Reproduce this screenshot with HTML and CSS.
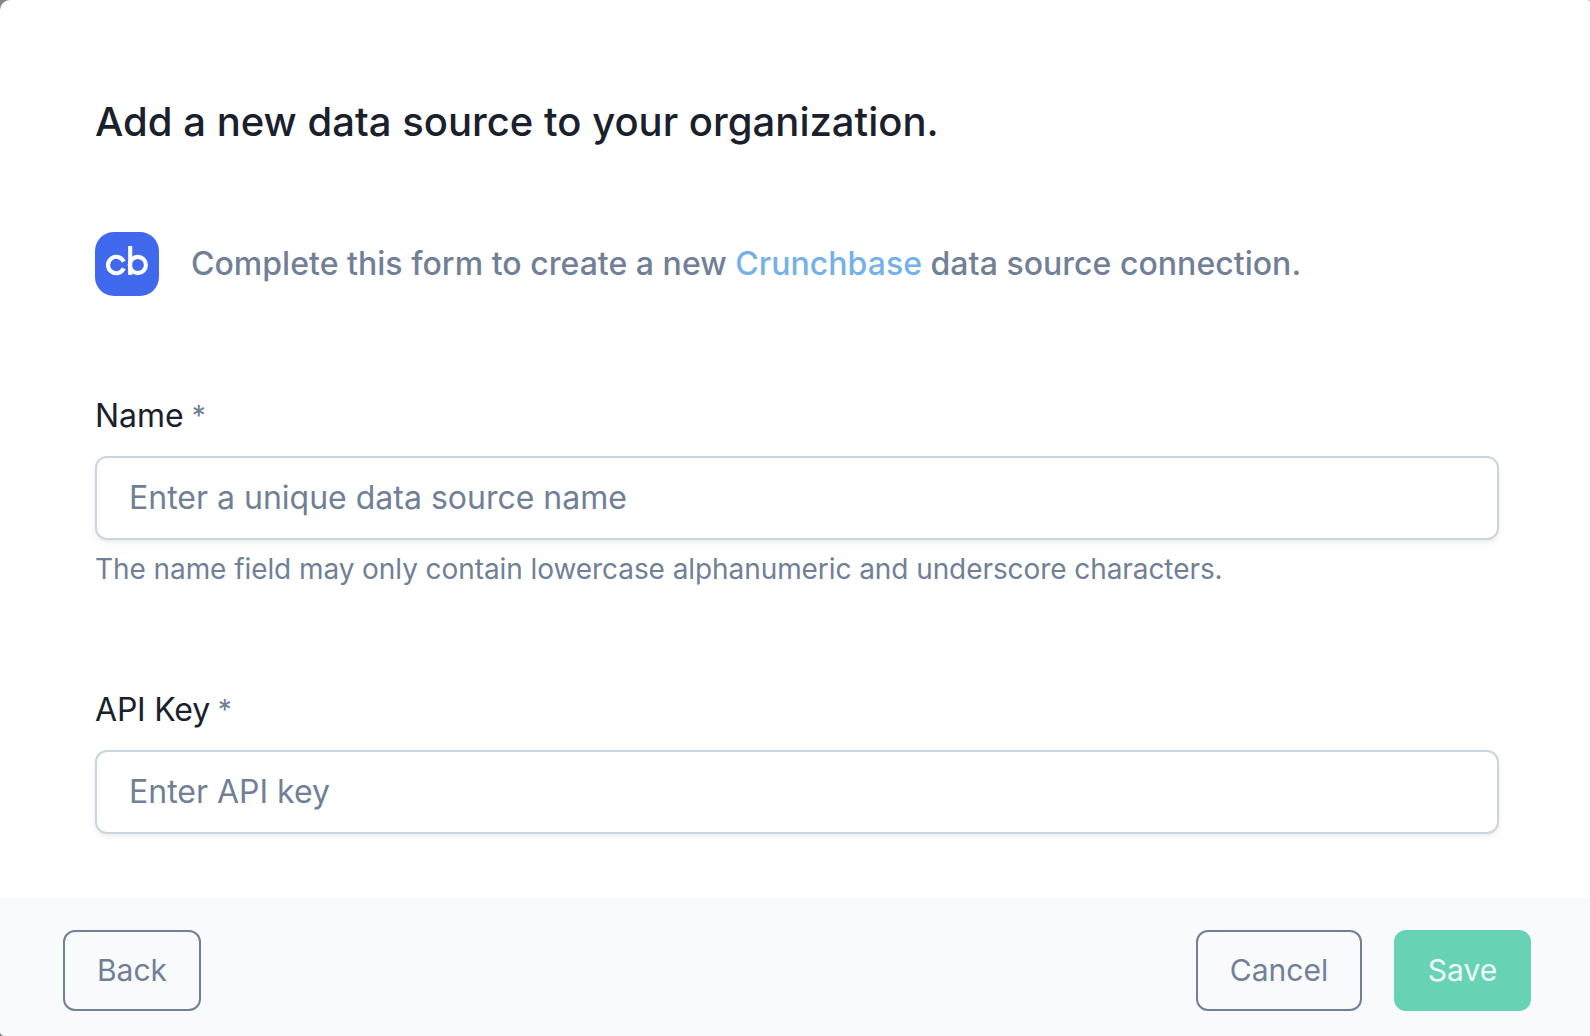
FILE: index.html
```html
<!DOCTYPE html>
<html lang="en">
<head>
<meta charset="utf-8">
<title>Add data source</title>
<link rel="stylesheet" href="styles.css">
</head>
<body>
<main class="modal">
  <form class="content">
    <h1 class="title">Add a new data source to your organization.</h1>
    <div class="intro">
      <svg class="logo" viewBox="0 0 64 64" role="img" aria-label="Crunchbase">
        <rect width="64" height="64" rx="19" fill="#4069ee"/>
        <g fill="none" stroke="#fff" stroke-width="4.1">
          <path d="M28.700 29.600A8.200 8.200 0 1 0 28.700 36.400"/>
          <path d="M35.200 14V42.900"/>
          <circle cx="42.800" cy="33" r="8.100"/>
        </g>
      </svg>
      <p class="intro-text">Complete this form to create a new <a class="link">Crunchbase</a> data source connection.</p>
    </div>
    <div class="field">
      <label class="label" for="name">Name <span class="required">*</span></label>
      <input class="input" id="name" type="text" placeholder="Enter a unique data source name">
      <p class="hint">The name field may only contain lowercase alphanumeric and underscore characters.</p>
    </div>
    <div class="field">
      <label class="label key-label" for="key">API Key <span class="required">*</span></label>
      <input class="input" id="key" type="text" placeholder="Enter API key">
    </div>
  </form>
  <footer class="footer">
    <button class="button back" type="button">Back</button>
    <button class="button cancel" type="button">Cancel</button>
    <button class="button save" type="button">Save</button>
  </footer>
</main>
</body>
</html>
```
FILE: styles.css
```css
* { box-sizing: border-box; }
body {
  margin: 0;
  background: #87878f;
  font-family: Inter, "Liberation Sans", sans-serif;
  color: #1a202c;
  overflow: hidden;
}
.modal {
  display: flex;
  flex-direction: column;
  height: 1036px;
  background: #fff;
  border-radius: 10px 2px 0 5px;
  overflow: hidden;
}
.content {
  flex: 1;
  padding: 98px 91px 0 95px;
}
.title {
  margin: 0;
  font-size: 40px;
  line-height: 48px;
  font-weight: 500;
  letter-spacing: .02px;
  white-space: nowrap;
}
.intro {
  display: flex;
  align-items: center;
  gap: 32px;
  margin-top: 86px;
  height: 64px;
}
.logo { width: 64px; height: 64px; flex: none; }
.intro-text {
  margin: 0;
  font-size: 32px;
  line-height: 48px;
  font-weight: 500;
  letter-spacing: .03px;
  color: #718096;
  white-space: nowrap;
}
.link { color: #74b0ea; }
.field { height: 294px; padding-top: 96px; }
.label {
  display: block;
  height: 64px;
  font-size: 32px;
  line-height: 48px;
}
.key-label { letter-spacing: -.2px; }
.required {
  margin-left: -1px;
  color: #718096;
  font-size: 28px;
  line-height: 1;
  vertical-align: 1px;
}
.input {
  display: block;
  width: 100%;
  height: 84px;
  padding: 0 32px 2px;
  border: 2px solid #cbd5e0;
  border-radius: 12px;
  background: #fff;
  box-shadow: 0 2px 4px rgba(0, 0, 0, .05), 0 4px 8px rgba(0, 0, 0, .03);
  font: 400 32px/48px Inter, "Liberation Sans", sans-serif;
}
.input::placeholder { color: #718096; opacity: 1; }
.hint {
  margin: 8px 0 0;
  font-size: 28px;
  line-height: 42px;
  letter-spacing: -.075px;
  color: #718096;
  white-space: nowrap;
}
.footer {
  display: flex;
  align-items: flex-start;
  gap: 32px;
  height: 138px;
  padding: 32px 59px 0 63px;
  background: #f8fafc;
}
.button {
  height: 81px;
  padding: 0;
  border: 2px solid #718096;
  border-radius: 12px;
  background: transparent;
  color: #718096;
  font: 400 30px/45px Inter, "Liberation Sans", sans-serif;
}
.back { width: 138px; margin-right: auto; }
.cancel { width: 166px; }
.save {
  width: 137px;
  border-color: #67d2b4;
  background: #67d2b4;
  color: #f0fbf8;
}
```
